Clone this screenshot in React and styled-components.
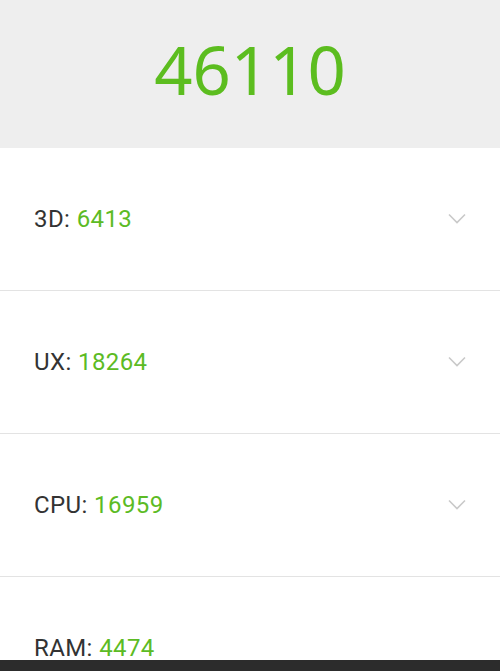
import styled, { createGlobalStyle } from "styled-components";

const GlobalStyle = createGlobalStyle`
  html, body {
    margin: 0;
    padding: 0;
    background: #ffffff;
  }
  * {
    box-sizing: border-box;
  }
`;

const Screen = styled.div`
  width: 100vw;
  height: 100vh;
  display: flex;
  flex-direction: column;
  overflow: hidden;
  font-family: Roboto, "Noto Sans", sans-serif;
`;

const Content = styled.div`
  flex: 1;
  overflow: hidden;
  display: flex;
  flex-direction: column;
`;

const Header = styled.div`
  height: 148px;
  flex-shrink: 0;
  background-color: #eeeeee;
  display: flex;
  align-items: center;
  justify-content: center;
`;

const Total = styled.div`
  font-family: "Noto Sans", Roboto, sans-serif;
  font-size: 67px;
  line-height: 1;
  color: #5cbd1f;
  margin-top: -10px;
`;

const Row = styled.div`
  height: 143px;
  flex-shrink: 0;
  display: flex;
  align-items: center;
  justify-content: space-between;
  padding: 0 34px;
  border-bottom: 1px solid #e3e3e3;
`;

const Label = styled.div`
  font-size: 24px;
  color: #333333;
  letter-spacing: 0.4px;
`;

const Score = styled.span`
  color: #5cbb24;
`;

const Chevron = styled.svg`
  width: 18px;
  height: 11px;
  margin-top: -2px;
  visibility: ${(p) => (p.$hidden ? "hidden" : "visible")};
`;

const NavBar = styled.div`
  height: 11px;
  flex-shrink: 0;
  background-color: #2c2c2c;
`;

const scores = [
  { name: "3D", value: 6413 },
  { name: "UX", value: 18264 },
  { name: "CPU", value: 16959 },
  { name: "RAM", value: 4474, noArrow: true },
];

const App = () => {
  return (
    <>
      <GlobalStyle />
      <Screen>
        <Content>
          <Header>
            <Total>46110</Total>
          </Header>
          {scores.map((s) => (
            <Row key={s.name}>
              <Label>
                {s.name}: <Score>{s.value}</Score>
              </Label>
              <Chevron viewBox="0 0 18 11" $hidden={s.noArrow}>
                <path
                  d="M1 1.5 L9 9.5 L17 1.5"
                  fill="none"
                  stroke="#c9c9c9"
                  strokeWidth="1.6"
                />
              </Chevron>
            </Row>
          ))}
        </Content>
        <NavBar />
      </Screen>
    </>
  );
};

export default App;
